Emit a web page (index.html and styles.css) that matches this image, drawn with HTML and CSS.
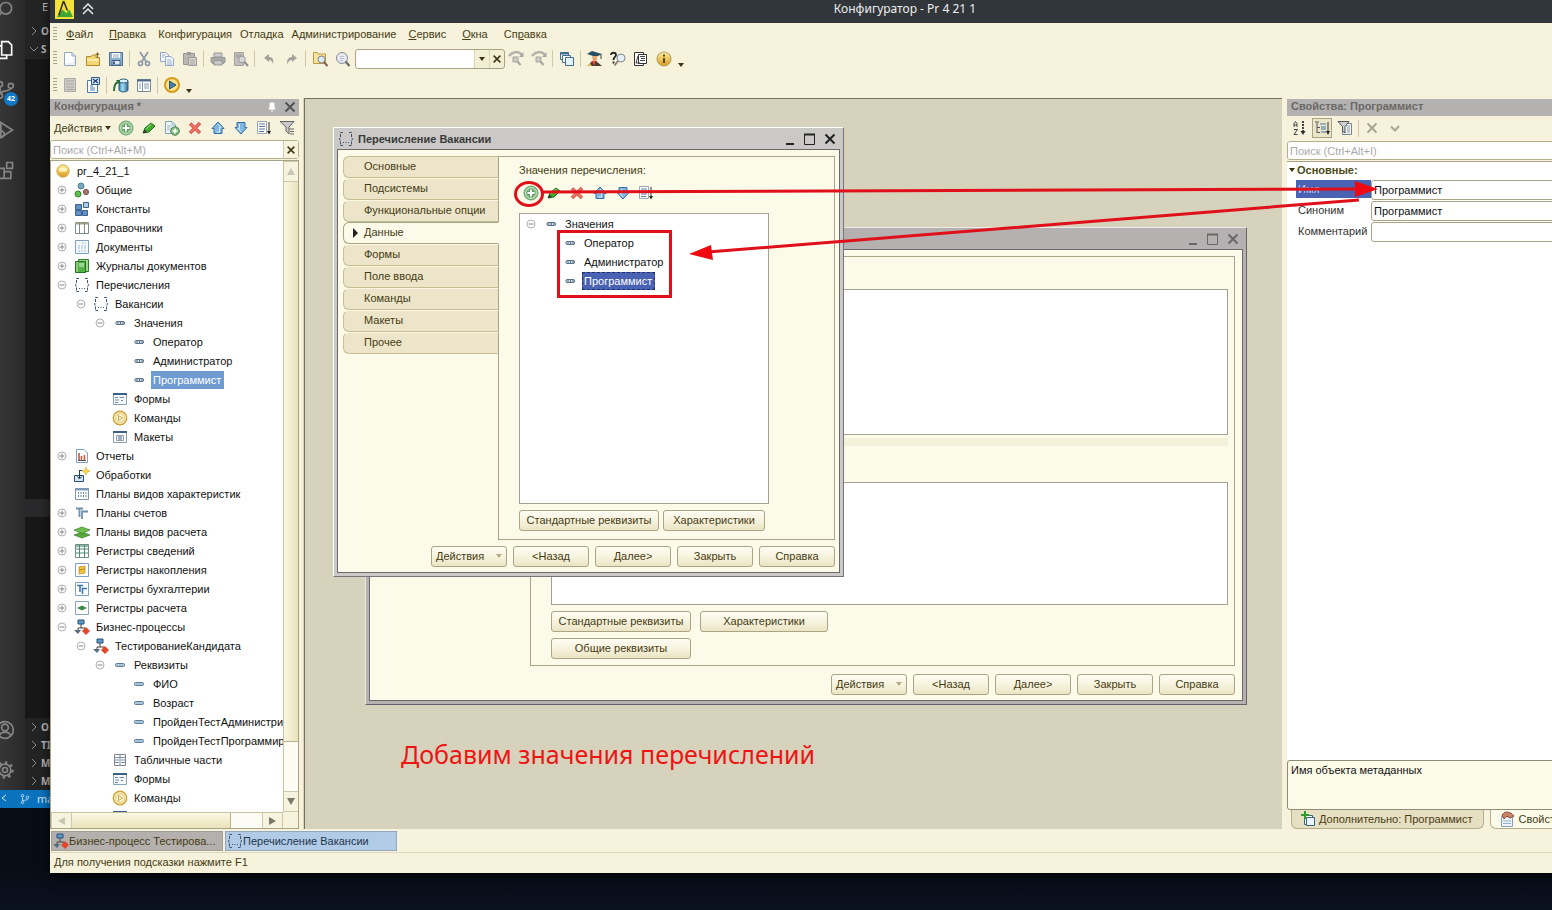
FILE: index.html
```
<!DOCTYPE html>
<html lang="ru">
<head>
<meta charset="utf-8">
<title>Конфигуратор - Pr 4 21 1</title>
<link rel="stylesheet" href="styles.css">
</head>
<body>
<svg class="defs" aria-hidden="true">
  <defs>
    <linearGradient id="gold" x1="0" y1="0" x2="0" y2="1"><stop offset="0" stop-color="#fff0a0"/><stop offset="1" stop-color="#d99a1c"/></linearGradient>
    <linearGradient id="blue" x1="0" y1="0" x2="1" y2="0"><stop offset="0" stop-color="#2d7fb4"/><stop offset=".4" stop-color="#a8dcf2"/><stop offset="1" stop-color="#2a6d9c"/></linearGradient>
  </defs>
  <symbol id="plus" viewBox="0 0 10 10"><circle cx="5" cy="5" r="4" fill="#fff" stroke="#b0b0b0"/><path d="M2.500 5H7.500M5 2.500V7.500" stroke="#888"/></symbol>
  <symbol id="minus" viewBox="0 0 10 10"><circle cx="5" cy="5" r="4" fill="#fff" stroke="#b0b0b0"/><path d="M2.500 5H7.500" stroke="#888"/></symbol>
  <symbol id="add" viewBox="0 0 16 16"><circle cx="8" cy="8" r="7" fill="#8cc08a" stroke="#6f9f72"/><circle cx="8" cy="8" r="5.500" fill="none" stroke="#bfe0b8"/><path d="M8 4V12M4 8H12" stroke="#5f9a63" stroke-width="4"/><path d="M8 4.500V11.500M4.500 8H11.500" stroke="#fff" stroke-width="2"/></symbol>
  <symbol id="pencil" viewBox="0 0 16 16"><path d="M2 13L4 8L10 3L14 6L8 12Z" fill="#3fae2a" stroke="#1f6d1a"/><path d="M5 9L10.500 4" stroke="#a6e38c"/><path d="M2 13L3.500 9.500L6 12.300Z" fill="#333"/></symbol>
  <symbol id="copyadd" viewBox="0 0 16 16"><path d="M1.500 1.500H8L11.500 5V13.500H1.500Z" fill="#f4fafc" stroke="#7ba3b8"/><path d="M8 1.500V5H11.500M3 6H8M3 8H7M3 10H6" fill="none" stroke="#9db9c8"/><circle cx="11" cy="11" r="4.300" fill="#7cba78" stroke="#4f8a55"/><path d="M11 8.500V13.500M8.500 11H13.500" stroke="#fff" stroke-width="1.600"/></symbol>
  <symbol id="del" viewBox="0 0 16 16"><path d="M3 3.500L13 13M13 3L3 13" stroke="#d4574a" stroke-width="3.400"/><path d="M3.500 4L12.500 12.500M12.500 3.500L3.500 12.500" stroke="#f0776a" stroke-width="1.600"/></symbol>
  <symbol id="up" viewBox="0 0 16 16"><path d="M8 2L14 8.500H12V13.500H4V8.500H2Z" fill="#7fb8e4" stroke="#3a6c9c"/><path d="M8 4L11 7.500H9.500V12H6.500" fill="none" stroke="#d4ebfa"/></symbol>
  <symbol id="down" viewBox="0 0 16 16"><path d="M8 14L14 7.500H12V2.500H4V7.500H2Z" fill="#7fb8e4" stroke="#3a6c9c"/><path d="M6.500 4V8.500H5L8 12" fill="none" stroke="#d4ebfa"/></symbol>
  <symbol id="sort" viewBox="0 0 16 16"><path d="M1.500 1.500H10.500V13.500H1.500Z" fill="#fff" stroke="#9aa8b4"/><path d="M3 4H9M3 6.500H9M3 9H9M3 11.500H8" stroke="#56789a"/><path d="M13 2V13" stroke="#333"/><path d="M11 11H15L13 14.500Z" fill="#222"/></symbol>
  <symbol id="filter" viewBox="0 0 16 16"><path d="M1 1.500H15L10 7V14L7 11V7Z" fill="#c9c9c9" stroke="#666"/><path d="M10 9H15M11 11.500H15M11 14H15" stroke="#666"/></symbol>
  <symbol id="filterdoc" viewBox="0 0 16 16"><path d="M5.500 3.500H14.500V14.500H5.500Z" fill="#eef2f6" stroke="#7a8896"/><path d="M9 6H13M10 8H13M10 10H13M10 12H13" stroke="#8fa0b0"/><path d="M1 1.500H12L8 6.500V13L5.500 11V6.500Z" fill="#d0d0d0" stroke="#555"/></symbol>
  <symbol id="new" viewBox="0 0 16 16"><path d="M2.500 1.500H10L13.500 5V14.500H2.500Z" fill="#fff" stroke="#8ea8c0"/><path d="M10 1.500V5H13.500" fill="#dce8f2" stroke="#8ea8c0"/><path d="M4 13H12V7" fill="none" stroke="#d5e3ee"/></symbol>
  <symbol id="open" viewBox="0 0 16 16"><path d="M1.500 5.500H6L7.500 4H11V6.500H14.500V14.500H1.500Z" fill="#f3d774" stroke="#b08a2c"/><path d="M2 9H14" stroke="#fbecae" stroke-width="2"/><path d="M12.500 7V2" stroke="#8a6d20"/><path d="M10.500 4L12.500 1L14.500 4Z" fill="#8a6d20"/></symbol>
  <symbol id="save" viewBox="0 0 16 16"><path d="M1.500 1.500H14.500V14.500H1.500Z" fill="#8fb2d0" stroke="#4f6f92"/><path d="M4 2H12V7H4Z" fill="#fff"/><path d="M5 4H11M5 6H11" stroke="#8ea8c0"/><path d="M4 9.500H12V14H4Z" fill="#dfe9f0" stroke="#3f5f82"/><path d="M6 10.500V13" stroke="#3f5f82" stroke-width="2"/></symbol>
  <symbol id="cut" viewBox="0 0 16 16"><path d="M4 1L10.500 11M12 1L5.500 11" stroke="#8f9aa8" stroke-width="1.800"/><circle cx="4.500" cy="12.500" r="2" fill="none" stroke="#8a93a4" stroke-width="1.500"/><circle cx="11.500" cy="12.500" r="2" fill="none" stroke="#8a93a4" stroke-width="1.500"/></symbol>
  <symbol id="copy" viewBox="0 0 16 16"><path d="M1.500 1.500H7L9.500 4V10.500H1.500Z" fill="#f2f5fa" stroke="#93a4c6"/><path d="M6.500 5.500H12L14.500 8V14.500H6.500Z" fill="#f2f5fa" stroke="#93a4c6"/><path d="M3 4H6M3 6H5M8 9H12M8 11H13M8 13H13" stroke="#9fb0d0"/></symbol>
  <symbol id="paste" viewBox="0 0 16 16"><path d="M1.500 2.500H12.500V13.500H1.500Z" fill="#bab8b2" stroke="#9a9894"/><path d="M5 1H9V4H5Z" fill="#999"/><path d="M6.500 6.500H14.500V14.500H6.500Z" fill="#d6d4ce" stroke="#9c9a98"/><path d="M8 9H13M8 11H13M8 13H13" stroke="#aaa"/></symbol>
  <symbol id="print" viewBox="0 0 16 16"><path d="M4 2H12V6H4Z" fill="#ccc" stroke="#999"/><path d="M1 6.500H15V11L13 13H3L1 11Z" fill="#aaa" stroke="#999"/><path d="M4 9.500H12V14H4Z" fill="#c8c8c8" stroke="#999"/></symbol>
  <symbol id="preview" viewBox="0 0 16 16"><path d="M1.500 1.500H10.500V14.500H1.500Z" fill="#c2c0bc" stroke="#a5a39f"/><path d="M3 4H9M3 6H9" stroke="#999"/><circle cx="9" cy="8.500" r="3.300" fill="#d6d6d6" stroke="#999"/><path d="M11.500 11L15 15" stroke="#8d8d8d" stroke-width="2"/></symbol>
  <symbol id="undo" viewBox="0 0 16 16"><path d="M3 7L8 3V6C12 6 13 9 12 13C11 10 10 9 8 9V11Z" fill="#a3a39c"/></symbol>
  <symbol id="redo" viewBox="0 0 16 16"><path d="M13 7L8 3V6C4 6 3 9 3 13C5 10 6 9 8 9V11Z" fill="#a3a39c"/></symbol>
  <symbol id="findin" viewBox="0 0 16 16"><path d="M1.500 1.500H5L6 3H13.500V12.500H1.500Z" fill="#f6e3a0" stroke="#c19b3e"/><circle cx="9.500" cy="8.500" r="3.500" fill="#dcecf5" stroke="#7b7b86"/><path d="M12 11L15.500 15" stroke="#8a5f50" stroke-width="2"/></symbol>
  <symbol id="mag" viewBox="0 0 16 16"><circle cx="7" cy="7" r="5.500" fill="#e4e9f2" stroke="#888c98"/><path d="M5 5.500H9M5 7.500H9M5 9.500H8" stroke="#c0c4d0"/><path d="M10.500 10.500L14.500 15" stroke="#6e6a68" stroke-width="2.400"/></symbol>
  <symbol id="search-next" viewBox="0 0 16 16"><path d="M1 5C5 0 11 0 14 4" fill="none" stroke="#b3b1aa" stroke-width="2.400"/><path d="M11 6H15.500V1Z" fill="#a8a8a2"/><path d="M5 6H10V11H5Z" fill="#c9c8c2" stroke="#a5a5a0"/><path d="M9.500 10.500L12.500 14" stroke="#a5a5a0" stroke-width="2"/></symbol>
  <symbol id="windows" viewBox="0 0 16 16"><path d="M1.500 1.500H9.500V8.500H1.500Z" fill="#fff" stroke="#426c94"/><path d="M1 2.500H10" stroke="#426c94" stroke-width="2"/><path d="M3.500 4.500H11.500V11.500H3.500Z" fill="#fff" stroke="#426c94"/><path d="M6.500 6.500H14.500V14.500H6.500Z" fill="#e3f3fa" stroke="#426c94"/></symbol>
  <symbol id="grad" viewBox="0 0 16 16"><path d="M0 3L5 0L15 3L9 6Z" fill="#274d63"/><path d="M14 3V8" stroke="#444"/><path d="M5 5H10V9L8 11H6Z" fill="#e8a77a"/><path d="M1 15L5 10H9L15 15Z" fill="#4a3c30"/><path d="M5 10L7 15L9 10Z" fill="#e24a3a"/><path d="M0 15L3 12L5 15Z" fill="#d8b13c"/></symbol>
  <symbol id="helpfind" viewBox="0 0 16 16"><path d="M1 4C1 1 6 1 6 4C6 6 3.500 6 3.500 9M3.500 10.500V12.500" fill="none" stroke="#222" stroke-width="1.800"/><circle cx="11" cy="7" r="4" fill="#e3eff5" stroke="#7d8c98"/><path d="M8 10L4.500 14.500" stroke="#8a8078" stroke-width="2"/></symbol>
  <symbol id="syntax" viewBox="0 0 16 16"><path d="M1.500 1.500H10.500V14.500H1.500Z" fill="#fff" stroke="#333"/><path d="M5.500 3.500H13.500V12.500H5.500Z" fill="#fff" stroke="#333"/><path d="M7 5.500H12M8 7.500H12M7 9.500H12M5 5L3 12H7" fill="none" stroke="#444"/></symbol>
  <symbol id="info" viewBox="0 0 16 16"><circle cx="8" cy="8" r="7" fill="url(#gold)" stroke="#b09a5c"/><path d="M8 7V12M8 3.500V5.500" stroke="#5a4a18" stroke-width="2"/></symbol>
  <symbol id="doc-off" viewBox="0 0 16 16"><path d="M2.500 1.500H13.500V14.500H2.500Z" fill="#cfcdc6" stroke="#aaa"/><path d="M4 4H12M4 7H12M4 10H12M4 12.500H12" stroke="#a4a4a0"/></symbol>
  <symbol id="doc-x" viewBox="0 0 16 16"><path d="M2.500 3.500H12.500V15.500H2.500Z" fill="#fff" stroke="#4d78a8"/><path d="M5 9H8M5 11H10M5 13H10" stroke="#4d78a8"/><path d="M6.500 .500H14.500V7.500H6.500Z" fill="#dceaf7" stroke="#2d588c"/><path d="M8 2L13 6M13 2L8 6" stroke="#22456e" stroke-width="1.500"/></symbol>
  <symbol id="db" viewBox="0 0 16 16"><path d="M6 4V13C6 15.500 15 15.500 15 13V4Z" fill="url(#blue)" stroke="#2c5b80"/><ellipse cx="10.500" cy="4" rx="4.500" ry="2" fill="#d7f0fa" stroke="#2c5b80"/><path d="M1 14C1 9 2 6 5 5" fill="none" stroke="#2b6b35" stroke-width="2"/><path d="M3 3H7V8Z" fill="#2b6b35"/></symbol>
  <symbol id="winlist" viewBox="0 0 16 16"><path d="M1.500 2.500H14.500V14.500H1.500Z" fill="#fff" stroke="#7b8a98"/><path d="M1 3.500H15" stroke="#4a6b8c" stroke-width="2"/><path d="M6.500 5V14M3 7H5M3 9H5M3 11H5M8 7H13M8 9H13M8 11H13" stroke="#889cb0"/></symbol>
  <symbol id="play" viewBox="0 0 16 16"><circle cx="8" cy="8" r="7" fill="#fbe48a" stroke="#d69a1c" stroke-width="2"/><path d="M5.500 4L12 8L5.500 12Z" fill="#4a7fae" stroke="#28527a"/></symbol>
  <symbol id="ball" viewBox="0 0 16 16"><circle cx="8" cy="8" r="6.200" fill="url(#gold)" stroke="#d3a94c"/><path d="M4 6C6 4 10 4 12 6V8C10 9 6 9 4 8Z" fill="#fff2bc"/></symbol>
  <symbol id="common" viewBox="0 0 16 16"><circle cx="7" cy="4" r="3" fill="#78a9b8" stroke="#4d7f90"/><circle cx="4" cy="12" r="3" fill="#5cc04a" stroke="#2f8a2a"/><circle cx="12" cy="10" r="2.600" fill="#a8766a" stroke="#7d5248"/></symbol>
  <symbol id="const" viewBox="0 0 16 16"><path d="M1.500 3.500H7.500V8.500H1.500ZM1.500 9.500H7.500V14.500H1.500ZM8.500 9.500H13.500V14.500H8.500Z" fill="#5f92c6" stroke="#3b628c"/><path d="M9.500 1.500H14.500V6.500H9.500Z" fill="#a9d0ea" stroke="#3b628c"/></symbol>
  <symbol id="refs" viewBox="0 0 16 16"><path d="M1.500 2.500H14.500V13.500H1.500Z" fill="#fff" stroke="#7e8c86"/><path d="M1 3.500H15" stroke="#a7a288" stroke-width="2"/><path d="M5.500 3V14M10.500 3V14" stroke="#7e8c86"/></symbol>
  <symbol id="docs" viewBox="0 0 16 16"><path d="M1.500 1.500H14.500V14.500H1.500Z" fill="#f4f9fd" stroke="#7fa0c4"/><path d="M8 4H12M4 7H12M4 9H12M4 12H12" stroke="#9bbbd8" stroke-dasharray="2 1"/></symbol>
  <symbol id="journal" viewBox="0 0 16 16"><path d="M4.500 1.500H14.500V13.500H4.500Z" fill="#9fd88a" stroke="#2f7f2c"/><path d="M1.500 3.500H11.500V14.500H1.500Z" fill="#55b045" stroke="#24701f"/><path d="M5 6H10M5 8H10" stroke="#dff5d5"/><path d="M3 4V14" stroke="#c2ecb4"/></symbol>
  <symbol id="enum" viewBox="0 0 16 16"><path d="M5 1.500H2.500V6L1.500 8L2.500 10V14.500H5M11 1.500H13.500V6L14.500 8L13.500 10V14.500H11" fill="none" stroke="#3f566e" stroke-dasharray="3 1"/><path d="M5 11.500H6M7.500 11.500H8.500M10 11.500H11" stroke="#3f566e"/></symbol>
  <symbol id="val" viewBox="0 0 16 16"><path d="M4.500 6.500H12L12.800 8L12 9.500H4.500L3.700 8Z" fill="#d2dfe8" stroke="#5d7488"/><path d="M6 6V10M8.500 6V10M11 6V10" stroke="#5d7488"/></symbol>
  <symbol id="attr" viewBox="0 0 16 16"><rect x="3.500" y="6.500" width="9" height="3" rx="1" fill="#a8c4d8" stroke="#607d96"/></symbol>
  <symbol id="form" viewBox="0 0 16 16"><path d="M1.500 2.500H14.500V13.500H1.500Z" fill="#f4f8fb" stroke="#8aa0b4"/><path d="M1 3H15" stroke="#3a6186" stroke-width="2"/><path d="M3 6.500H6M7.500 6.500H12M3 9H7M3 11.500H6M9 9.500H11" stroke="#6e8aa4"/></symbol>
  <symbol id="cmd" viewBox="0 0 16 16"><circle cx="8" cy="8" r="6.700" fill="#fdf3c0" stroke="#cfa03a" stroke-width="1.400"/><circle cx="8" cy="8" r="4.300" fill="#fffbe6" stroke="#dfbf60"/><path d="M6.500 5.500L10.500 8L6.500 10.500Z" fill="#fff" stroke="#cfa03a"/></symbol>
  <symbol id="layout" viewBox="0 0 16 16"><path d="M1.500 2.500H14.500V13.500H1.500Z" fill="#fff" stroke="#8c9eae"/><path d="M1 3H15" stroke="#3d6186" stroke-width="2"/><path d="M4.500 6.500H11.500V11.500H4.500Z" fill="#eef3f8" stroke="#8fa2b4"/><path d="M6 8H10M6 10H10" stroke="#4f6a86"/></symbol>
  <symbol id="report" viewBox="0 0 16 16"><path d="M2.500 1.500H10L13.500 5V14.500H2.500Z" fill="#fff" stroke="#7fa0c4"/><path d="M5 12V5M7.500 12V8M10.500 12V7" stroke="#c05a3c" stroke-width="1.600"/><path d="M4 12.500H12" stroke="#555"/></symbol>
  <symbol id="proc" viewBox="0 0 16 16"><path d="M.500 8.500H9.500V14.500H.500Z" fill="#d6e4f2" stroke="#2c4c72"/><path d="M5.500 3V11M3.500 9.500L5.500 12L7.500 9.500M5.500 3.500H8" fill="none" stroke="#1f3a5c"/><path d="M12 0L13 3L16 4L13 5.500L12 8L10.500 5.500L8 4L11 3Z" fill="#f6d850" stroke="#d8ac2c" stroke-width=".600"/></symbol>
  <symbol id="plan" viewBox="0 0 16 16"><path d="M1.500 2.500H14.500V13.500H1.500Z" fill="#fff" stroke="#7d93a8"/><path d="M1 3.500H15" stroke="#7f9cb8" stroke-width="2"/><path d="M4.500 6V12M7 6V12M9.500 6V12M12 6V12" stroke="#5f83a8" stroke-dasharray="2 1"/></symbol>
  <symbol id="accounts" viewBox="0 0 16 16"><path d="M2 3.500H9M5.500 3V12M8 5.500V14M8 6.500H14" fill="none" stroke="#6b90b2" stroke-width="1.800"/></symbol>
  <symbol id="calc" viewBox="0 0 16 16"><path d="M0 11L8 8L16 11L8 14Z" fill="#57a83c" stroke="#2d7020" stroke-width=".600"/><path d="M0 6L8 3L16 6L8 9.500Z" fill="#6cc04a" stroke="#2d7020" stroke-width=".600"/></symbol>
  <symbol id="reginfo" viewBox="0 0 16 16"><path d="M1.500 1.500H14.500V14.500H1.500Z" fill="#fff" stroke="#6c8f86"/><path d="M2 3H14" stroke="#8fb8aa" stroke-width="2"/><path d="M5.500 2V14M10.500 2V14M2 6H14M2 10H14" stroke="#4f8a76"/></symbol>
  <symbol id="regacc" viewBox="0 0 16 16"><path d="M1.500 1.500H14.500V14.500H1.500Z" fill="#fff" stroke="#7fa0c4"/><path d="M5 5L11 4V11L5 12Z" fill="#f2c63e" stroke="#b88420" stroke-width=".700"/><path d="M5 8L11 7" stroke="#b88420"/></symbol>
  <symbol id="regbook" viewBox="0 0 16 16"><path d="M1.500 1.500H14.500V14.500H1.500Z" fill="#fff" stroke="#7fa0c4"/><path d="M3 4.500H9M6 4V11M8.500 6.500V13M8.500 7.500H13" stroke="#3f76a8" stroke-width="1.600"/></symbol>
  <symbol id="regcalc" viewBox="0 0 16 16"><path d="M1.500 1.500H14.500V14.500H1.500Z" fill="#fff" stroke="#88a8b8"/><path d="M3 8L8 5.500L13 8L8 10.500Z" fill="#3f8a4a"/></symbol>
  <symbol id="bp" viewBox="0 0 16 16"><path d="M4 1H10V5H4Z" fill="#5f9ac4" stroke="#28507c"/><path d="M7 5V9M4 9H11M4 9V12M11 9V11" fill="none" stroke="#444"/><path d="M0 11H7L4 15Z" fill="#566c80"/><path d="M12 8L16 12L12 16L8 12Z" fill="#e0492e"/></symbol>
  <symbol id="table" viewBox="0 0 16 16"><path d="M2.500 2.500H13.500V13.500H2.500Z" fill="#fff" stroke="#7c8894"/><path d="M8 3V13M3 5.500H13M3 8H7M9 8H13M3 10.500H7M9 10.500H13" stroke="#7c8ea0"/></symbol>
  <symbol id="az" viewBox="0 0 16 16"><path d="M3 7V3.500L4.500 1.500L6 3.500V7M3 5H6M3 9.500H6.500L3 14.500H6.500" fill="none" stroke="#444"/><path d="M12 1V12" stroke="#444" stroke-width="2" stroke-dasharray="2 1"/><path d="M9.500 11H14.500L12 15Z" fill="#333"/></symbol>
  <symbol id="cat" viewBox="0 0 16 16"><path d="M1 2H5M3 3V13M3 7.500H6M3 12.500H6" stroke="#556" fill="none"/><path d="M6 4H12M7 7H12M7 9H12M7 12H12" stroke="#4678a8"/><path d="M14 2V12" stroke="#333"/><path d="M12 11H16L14 15Z" fill="#222"/></symbol>
  <symbol id="cross" viewBox="0 0 16 16"><path d="M3.500 3.500L12.500 12.500M12.500 3.500L3.500 12.500" stroke="currentColor" stroke-width="2"/></symbol>
  <symbol id="check" viewBox="0 0 16 16"><path d="M4 6.500L8 10.500L12 6" fill="none" stroke="currentColor" stroke-width="2"/></symbol>
  <symbol id="min" viewBox="0 0 16 16"><path d="M4 13H12" stroke="currentColor" stroke-width="2"/></symbol>
  <symbol id="max" viewBox="0 0 16 16"><path d="M2.500 3.500H12.500V13.500H2.500Z" fill="none" stroke="currentColor"/><path d="M2 3.500H13" stroke="currentColor" stroke-width="2"/></symbol>
  <symbol id="pin" viewBox="0 0 16 16"><path d="M6 4H10V9H11V10H5V9H6ZM8 10V13" fill="#fff" stroke="#fff"/></symbol>
  <symbol id="addwin" viewBox="0 0 16 16"><path d="M4.500 4.500H12.500V13.500H4.500Z" fill="#fff" stroke="#3a6186"/><path d="M6.500 6.500H14.500V14.500H6.500Z" fill="#edf5fb" stroke="#3a6186"/><path d="M5 0V8M1 4H9" stroke="#2f9a2c" stroke-width="2"/></symbol>
  <symbol id="props" viewBox="0 0 16 16"><path d="M2.500 5.500H13.500V15.500H2.500Z" fill="#eef4fa" stroke="#8aa0b8"/><path d="M4 10H12M4 12.500H12" stroke="#8fb0d0"/><path d="M3 4C6 0 11 0 15 5L11 7L8 5L5 8Z" fill="#c98568" stroke="#8c4a38"/></symbol>
</svg>

<div class="desktop">

  <div class="editor">
    <div class="editor-main">
      <nav class="activity" aria-label="Activity bar">
        <svg class="act" viewBox="0 0 24 24"><circle cx="13" cy="10" r="7"/><path d="M8 15L2 22"/></svg>
        <svg class="act on" viewBox="0 0 24 24"><path d="M8 2H16L20 6V18H8ZM8 7H3V22H14V18"/></svg>
        <span class="act-badge"><svg class="act" viewBox="0 0 24 24"><circle cx="6" cy="5" r="3"/><circle cx="19" cy="7" r="3"/><circle cx="6" cy="19" r="3"/><path d="M6 8V16M19 10C19 14 8 12 6 16"/></svg><b>42</b></span>
        <svg class="act" viewBox="0 0 24 24"><path d="M7 3L21 12L7 21Z"/><circle cx="7" cy="17" r="4"/></svg>
        <svg class="act" viewBox="0 0 24 24"><path d="M3 10H11V22H3ZM11 14H19V22H11ZM14 3H21V10H14Z"/></svg>
        <span class="grow"></span>
        <svg class="act" viewBox="0 0 24 24"><circle cx="12" cy="12" r="10"/><circle cx="12" cy="9" r="4"/><path d="M5 19C7 13 17 13 19 19"/></svg>
        <svg class="act" viewBox="0 0 24 24"><circle cx="12" cy="12" r="3"/><circle cx="12" cy="12" r="7"/><circle cx="12" cy="12" r="9" stroke-width="3" stroke-dasharray="3 4"/></svg>
      </nav>
      <div class="side">
        <p class="side-title">E</p>
        <p class="side-head"><svg viewBox="0 0 8 8"><path d="M2 0L6 4L2 8"/></svg>O</p>
        <p class="side-head"><svg viewBox="0 0 8 8"><path d="M0 2L4 6L8 2"/></svg>S</p>
        <div class="files"><span class="file-on"></span></div>
        <p class="side-head"><svg viewBox="0 0 8 8"><path d="M2 0L6 4L2 8"/></svg>O</p>
        <p class="side-head"><svg viewBox="0 0 8 8"><path d="M2 0L6 4L2 8"/></svg>TI</p>
        <p class="side-head"><svg viewBox="0 0 8 8"><path d="M2 0L6 4L2 8"/></svg>M</p>
        <p class="side-head"><svg viewBox="0 0 8 8"><path d="M2 0L6 4L2 8"/></svg>M</p>
      </div>
    </div>
    <div class="editor-status"><svg viewBox="0 0 8 12"><path d="M5 2L1 5L5 8"/></svg><svg viewBox="0 0 12 12"><circle cx="3" cy="2" r="1.500"/><circle cx="3" cy="10" r="1.500"/><circle cx="9" cy="4" r="1.500"/><path d="M3 4V8M9 6C9 8 5 7 3 8"/></svg>ma</div>
  </div>

  <div class="app">
    <header class="titlebar">
      <svg class="logo" viewBox="0 0 20 20"><path d="M0 0H20V20H0Z" fill="#f3e23c"/><path d="M2 18L8 10L12 14L15 10L19 18Z" fill="#3fa535"/><path d="M9 1L4 16M9 1L13 11" stroke="#2e2a12" stroke-width="1.600" fill="none"/></svg>
      <svg class="chev" viewBox="0 0 12 12"><path d="M1 6L6 1L11 6M1 11L6 6L11 11"/></svg>
      <h1>Конфигуратор - Pr 4 21 1</h1>
    </header>

    <nav class="menubar">
      <span class="grip"></span>
      <button class="mn"><u>Ф</u>айл</button><button class="mn"><u>П</u>равка</button><button class="plain">Конфигурация</button><button class="plain">Отладка</button><button class="plain">Администрирование</button><button class="mn"><u>С</u>ервис</button><button class="mn"><u>О</u>кна</button><button class="mn">Сп<u>р</u>авка</button>
    </nav>

    <div class="toolbar">
      <span class="grip"></span>
      <button aria-label="Новый"><svg><use href="#new"/></svg></button>
      <button aria-label="Открыть"><svg><use href="#open"/></svg></button>
      <button aria-label="Сохранить"><svg><use href="#save"/></svg></button>
      <span class="sep"></span>
      <button aria-label="Вырезать"><svg><use href="#cut"/></svg></button>
      <button aria-label="Копировать"><svg><use href="#copy"/></svg></button>
      <button aria-label="Вставить"><svg><use href="#paste"/></svg></button>
      <span class="sep"></span>
      <button aria-label="Печать"><svg><use href="#print"/></svg></button>
      <button aria-label="Просмотр"><svg><use href="#preview"/></svg></button>
      <span class="sep"></span>
      <button aria-label="Отменить"><svg><use href="#undo"/></svg></button>
      <button aria-label="Вернуть"><svg><use href="#redo"/></svg></button>
      <span class="sep"></span>
      <button aria-label="Глобальный поиск"><svg><use href="#findin"/></svg></button>
      <button aria-label="Найти"><svg><use href="#mag"/></svg></button>
      <span class="combo"><input type="text" aria-label="Строка поиска"><button aria-label="Список"><i class="tri"></i></button><button aria-label="Очистить"><svg><use href="#cross"/></svg></button></span>
      <button aria-label="Найти следующий"><svg><use href="#search-next"/></svg></button>
      <button aria-label="Найти предыдущий"><svg><use href="#search-next"/></svg></button>
      <span class="sep"></span>
      <button aria-label="Окна"><svg><use href="#windows"/></svg></button>
      <span class="sep"></span>
      <button aria-label="Обучение"><svg><use href="#grad"/></svg></button>
      <button aria-label="Поиск в справке"><svg><use href="#helpfind"/></svg></button>
      <button aria-label="Синтакс-помощник"><svg><use href="#syntax"/></svg></button>
      <button aria-label="О программе"><svg><use href="#info"/></svg></button>
      <i class="tri more"></i>
    </div>

    <div class="toolbar second">
      <span class="grip"></span>
      <button aria-label="Модуль"><svg><use href="#doc-off"/></svg></button>
      <button aria-label="Закрыть конфигурацию"><svg><use href="#doc-x"/></svg></button>
      <span class="sep"></span>
      <button aria-label="Обновить базу данных"><svg><use href="#db"/></svg></button>
      <button aria-label="Окно конфигурации"><svg><use href="#winlist"/></svg></button>
      <span class="sep"></span>
      <button aria-label="Запуск"><svg><use href="#play"/></svg></button>
      <i class="tri more"></i>
    </div>

    <div class="work">
      <aside class="config">
        <div class="panel-head"><h2>Конфигурация *</h2><button aria-label="Закрепить"><svg><use href="#pin"/></svg></button><button aria-label="Закрыть панель"><svg><use href="#cross"/></svg></button></div>
        <div class="actions">
          <button class="act-menu">Действия<i class="tri"></i></button>
          <button aria-label="Добавить"><svg><use href="#add"/></svg></button>
          <button aria-label="Изменить"><svg><use href="#pencil"/></svg></button>
          <button aria-label="Скопировать"><svg><use href="#copyadd"/></svg></button>
          <button aria-label="Удалить"><svg><use href="#del"/></svg></button>
          <button aria-label="Вверх"><svg><use href="#up"/></svg></button>
          <button aria-label="Вниз"><svg><use href="#down"/></svg></button>
          <button aria-label="Упорядочить"><svg><use href="#sort"/></svg></button>
          <button aria-label="Отбор"><svg><use href="#filter"/></svg></button>
        </div>
        <div class="search"><input type="text" placeholder="Поиск (Ctrl+Alt+M)" aria-label="Поиск"><button aria-label="Очистить поиск"><svg><use href="#cross"/></svg></button></div>
        <div class="tree-box">
          <ul class="tree">
            <li class="l0"><svg><use href="#ball"/></svg><span>pr_4_21_1</span></li>
            <li class="l1"><svg class="ex"><use href="#plus"/></svg><svg><use href="#common"/></svg><span>Общие</span></li>
            <li class="l1"><svg class="ex"><use href="#plus"/></svg><svg><use href="#const"/></svg><span>Константы</span></li>
            <li class="l1"><svg class="ex"><use href="#plus"/></svg><svg><use href="#refs"/></svg><span>Справочники</span></li>
            <li class="l1"><svg class="ex"><use href="#plus"/></svg><svg><use href="#docs"/></svg><span>Документы</span></li>
            <li class="l1"><svg class="ex"><use href="#plus"/></svg><svg><use href="#journal"/></svg><span>Журналы документов</span></li>
            <li class="l1"><svg class="ex"><use href="#minus"/></svg><svg><use href="#enum"/></svg><span>Перечисления</span></li>
            <li class="l2"><svg class="ex"><use href="#minus"/></svg><svg><use href="#enum"/></svg><span>Вакансии</span></li>
            <li class="l3"><svg class="ex"><use href="#minus"/></svg><svg><use href="#val"/></svg><span>Значения</span></li>
            <li class="l4"><i class="ex"></i><svg><use href="#val"/></svg><span>Оператор</span></li>
            <li class="l4"><i class="ex"></i><svg><use href="#val"/></svg><span>Администратор</span></li>
            <li class="l4"><i class="ex"></i><svg><use href="#val"/></svg><span class="sel">Программист</span></li>
            <li class="l3"><i class="ex"></i><svg><use href="#form"/></svg><span>Формы</span></li>
            <li class="l3"><i class="ex"></i><svg><use href="#cmd"/></svg><span>Команды</span></li>
            <li class="l3"><i class="ex"></i><svg><use href="#layout"/></svg><span>Макеты</span></li>
            <li class="l1"><svg class="ex"><use href="#plus"/></svg><svg><use href="#report"/></svg><span>Отчеты</span></li>
            <li class="l1"><i class="ex"></i><svg><use href="#proc"/></svg><span>Обработки</span></li>
            <li class="l1"><i class="ex"></i><svg><use href="#plan"/></svg><span>Планы видов характеристик</span></li>
            <li class="l1"><svg class="ex"><use href="#plus"/></svg><svg><use href="#accounts"/></svg><span>Планы счетов</span></li>
            <li class="l1"><svg class="ex"><use href="#plus"/></svg><svg><use href="#calc"/></svg><span>Планы видов расчета</span></li>
            <li class="l1"><svg class="ex"><use href="#plus"/></svg><svg><use href="#reginfo"/></svg><span>Регистры сведений</span></li>
            <li class="l1"><svg class="ex"><use href="#plus"/></svg><svg><use href="#regacc"/></svg><span>Регистры накопления</span></li>
            <li class="l1"><svg class="ex"><use href="#plus"/></svg><svg><use href="#regbook"/></svg><span>Регистры бухгалтерии</span></li>
            <li class="l1"><svg class="ex"><use href="#plus"/></svg><svg><use href="#regcalc"/></svg><span>Регистры расчета</span></li>
            <li class="l1"><svg class="ex"><use href="#minus"/></svg><svg><use href="#bp"/></svg><span>Бизнес-процессы</span></li>
            <li class="l2"><svg class="ex"><use href="#minus"/></svg><svg><use href="#bp"/></svg><span>ТестированиеКандидата</span></li>
            <li class="l3"><svg class="ex"><use href="#minus"/></svg><svg><use href="#attr"/></svg><span>Реквизиты</span></li>
            <li class="l4"><i class="ex"></i><svg><use href="#attr"/></svg><span>ФИО</span></li>
            <li class="l4"><i class="ex"></i><svg><use href="#attr"/></svg><span>Возраст</span></li>
            <li class="l4"><i class="ex"></i><svg><use href="#attr"/></svg><span>ПройденТестАдминистри</span></li>
            <li class="l4"><i class="ex"></i><svg><use href="#attr"/></svg><span>ПройденТестПрограммир</span></li>
            <li class="l3"><i class="ex"></i><svg><use href="#table"/></svg><span>Табличные части</span></li>
            <li class="l3"><i class="ex"></i><svg><use href="#form"/></svg><span>Формы</span></li>
            <li class="l3"><i class="ex"></i><svg><use href="#cmd"/></svg><span>Команды</span></li>
            <li class="l3"><i class="ex"></i><svg><use href="#layout"/></svg></li>
          </ul>
          <div class="vscroll"><button class="dim" aria-label="Прокрутить вверх"><i class="arr u"></i></button><span class="thumb"></span><span class="track"></span><button aria-label="Прокрутить вниз"><i class="arr d"></i></button></div>
          <div class="hscroll"><button class="dim" aria-label="Прокрутить влево"><i class="arr l"></i></button><span class="thumb"></span><span class="track"></span><button aria-label="Прокрутить вправо"><i class="arr r"></i></button></div>
          <span class="corner"></span>
        </div>
      </aside>

      <main class="mdi">
        <section class="win back" aria-label="Бизнес-процесс ТестированиеКандидата">
          <div class="win-title"><span class="grow"></span><button aria-label="Свернуть"><svg><use href="#min"/></svg></button><button aria-label="Развернуть"><svg><use href="#max"/></svg></button><button aria-label="Закрыть окно"><svg><use href="#cross"/></svg></button></div>
          <div class="win-body">
            <div class="pane-row">
              <div class="back-tabs"></div>
              <div class="pane">
                <div class="box attrs"></div>
                <div class="strip"></div>
                <div class="box parts"></div>
                <div class="btns wide"><button class="btn w140">Стандартные реквизиты</button><button class="btn w128">Характеристики</button></div>
                <div class="btns"><button class="btn w140">Общие реквизиты</button></div>
              </div>
            </div>
            <div class="btns foot"><button class="btn w76 drop">Действия<i class="tri"></i></button><button class="btn w76">&lt;Назад</button><button class="btn w76">Далее&gt;</button><button class="btn w76">Закрыть</button><button class="btn w76">Справка</button></div>
          </div>
        </section>

        <section class="win front" aria-label="Перечисление Вакансии">
          <div class="win-title"><svg><use href="#enum"/></svg><h2>Перечисление Вакансии</h2><span class="grow"></span><button aria-label="Свернуть"><svg><use href="#min"/></svg></button><button aria-label="Развернуть"><svg><use href="#max"/></svg></button><button aria-label="Закрыть окно"><svg><use href="#cross"/></svg></button></div>
          <div class="win-body">
            <div class="pane-row">
              <div class="tabs">
                <button>Основные</button><button>Подсистемы</button><button>Функциональные опции</button><button class="on">Данные</button><button>Формы</button><button>Поле ввода</button><button>Команды</button><button>Макеты</button><button>Прочее</button>
              </div>
              <div class="pane">
                <p class="caption">Значения перечисления:</p>
                <div class="mini">
                  <button aria-label="Добавить значение"><svg><use href="#add"/></svg></button>
                  <button aria-label="Изменить значение"><svg><use href="#pencil"/></svg></button>
                  <button aria-label="Удалить значение"><svg><use href="#del"/></svg></button>
                  <button aria-label="Поднять"><svg><use href="#up"/></svg></button>
                  <button aria-label="Опустить"><svg><use href="#down"/></svg></button>
                  <button aria-label="Сортировать"><svg><use href="#sort"/></svg></button>
                </div>
                <ul class="tree box values">
                  <li class="l1"><svg class="ex"><use href="#minus"/></svg><svg><use href="#val"/></svg><span>Значения</span></li>
                  <li class="l2"><i class="ex"></i><svg><use href="#val"/></svg><span>Оператор</span></li>
                  <li class="l2"><i class="ex"></i><svg><use href="#val"/></svg><span>Администратор</span></li>
                  <li class="l2"><i class="ex"></i><svg><use href="#val"/></svg><span class="sel strong">Программист</span></li>
                </ul>
                <div class="btns near"><button class="btn w140">Стандартные реквизиты</button><button class="btn w102">Характеристики</button></div>
              </div>
            </div>
            <div class="btns foot"><button class="btn w76 drop">Действия<i class="tri"></i></button><button class="btn w76">&lt;Назад</button><button class="btn w76">Далее&gt;</button><button class="btn w76">Закрыть</button><button class="btn w76">Справка</button></div>
          </div>
        </section>
        <p class="note">Добавим значения перечислений</p>
      </main>

      <aside class="properties">
        <div class="panel-head"><h2>Свойства: Программист</h2></div>
        <div class="actions">
          <button aria-label="По алфавиту"><svg><use href="#az"/></svg></button>
          <button class="pressed" aria-label="По категориям"><svg><use href="#cat"/></svg></button>
          <button aria-label="Только важные"><svg><use href="#filterdoc"/></svg></button>
          <span class="sep"></span>
          <button class="gray" aria-label="Отменить изменения"><svg><use href="#cross"/></svg></button>
          <button class="gray" aria-label="Применить изменения"><svg><use href="#check"/></svg></button>
        </div>
        <div class="search"><input type="text" placeholder="Поиск (Ctrl+Alt+I)" aria-label="Поиск свойства"></div>
        <div class="props">
          <h3><i class="tri"></i>Основные:</h3>
          <div class="prop on"><label for="p-name">Имя</label><input id="p-name" type="text" value="Программист"></div>
          <div class="prop"><label for="p-syn">Синоним</label><input id="p-syn" type="text" value="Программист"></div>
          <div class="prop"><label for="p-com">Комментарий</label><input id="p-com" type="text"></div>
        </div>
        <div class="hint">Имя объекта метаданных</div>
        <div class="ptabs"><button><svg><use href="#addwin"/></svg>Дополнительно: Программист</button><button class="on"><svg><use href="#props"/></svg>Свойства: Программист</button></div>
      </aside>
    </div>

    <div class="wintabs"><button class="w172"><svg><use href="#bp"/></svg>Бизнес-процесс Тестирова...</button><button class="w172 on"><svg><use href="#enum"/></svg>Перечисление Вакансии</button></div>
    <footer class="status">Для получения подсказки нажмите F1</footer>
  </div>

  <svg class="marks" aria-hidden="true">
    <g fill="none" stroke="#e0101a" stroke-width="3">
      <ellipse cx="529" cy="194" rx="13.500" ry="11.500"/>
      <path d="M542 192L1360 189M1359 200L708 252"/>
      <path d="M558.500 231.500H670.500V296.500H558.500Z"/>
    </g>
    <path d="M1378 189L1355 181V197ZM689 254L711 245L713 260Z" fill="#ee0a10"/>
  </svg>
</div>
</body>
</html>
```
FILE: styles.css
```
* { box-sizing: border-box; }
body { margin: 0; font: 11px/14px "Liberation Sans", Arial, sans-serif; color: #463c14; background: #080e1c; overflow: hidden; }
button { font: inherit; color: inherit; background: none; border: 0; padding: 0; margin: 0; }
input { font: inherit; color: #111; min-width: 0; border: 0; padding: 0; margin: 0; background: #fff; outline: 0; }
h1, h2, h3, p, ul { margin: 0; padding: 0; }
svg { display: block; flex: none; width: 16px; height: 16px; }
.defs { position: absolute; width: 0; height: 0; }
.grow { flex: 1; }
.desktop { position: relative; height: 100vh; overflow: hidden; background: linear-gradient(#080c14, #080c14 95%, #0a1120); }

/* code editor peeking out behind the main window */
.editor { position: absolute; inset: 0 auto 102px 0; width: 640px; display: flex; flex-direction: column; font: 11px/14px "Noto Sans", sans-serif; }
.editor-main { flex: 1; display: flex; min-height: 0; }
.activity { width: 25px; background: linear-gradient(90deg, #363637, #29292a); display: flex; flex-direction: column; gap: 20px; padding-bottom: 10px; }
.act { width: 20px; height: 20px; margin-left: -5px; fill: none; stroke: #858585; stroke-width: 2; }
.act.on { stroke: #fff; }
.act-badge { position: relative; }
.act-badge b { position: absolute; left: 4px; top: 12px; width: 14px; border-radius: 7px; background: #1079c8; color: #fff; font-size: 7px; line-height: 14px; text-align: center; }
.side { width: 615px; display: flex; flex-direction: column; background: #232324; color: #b4b4b4; }
.side-title { padding: 0 0 8px 17px; }
.side-head { display: flex; align-items: center; gap: 3px; height: 18px; padding-left: 5px; font-size: 10px; font-weight: 700; }
.side-head svg { width: 8px; height: 8px; fill: none; stroke: #8a8a8a; }
.files { flex: 1; margin-top: 1px; background: #171718; }
.file-on { display: block; margin-top: 440px; height: 18px; background: #29292b; }
.editor-status { display: flex; align-items: center; gap: 16px; height: 18px; background: #0b73bd; color: #cfe4f4; }
.editor-status svg { width: 10px; height: 12px; fill: none; stroke: #cfe4f4; margin-right: -9px; }
.editor-status svg:first-child { margin-right: -6px; }

/* main window */
.app { position: absolute; inset: 0 -208px 37px 50px; display: flex; flex-direction: column; background: #f6f2dc; box-shadow: 0 4px 10px #000a; }
.titlebar { display: flex; align-items: center; height: 23px; padding: 0 5px 5px; background: #31363b; }
.titlebar h1 { flex: 1; margin-right: 39px; text-align: center; font: 12px/18px "Noto Sans", sans-serif; color: #eee; }
.logo { width: 19px; height: 19px; }
.chev { width: 12px; height: 12px; margin-left: 8px; fill: none; stroke: #e8e8e8; stroke-width: 1.500; }
.menubar { display: flex; align-items: center; height: 22px; padding: 0 3px; }
.menubar .mn { padding: 0 8px; }
.menubar .plain { padding: 0 4px; }
.grip { width: 4px; height: 15px; margin-right: -2px; background: repeating-linear-gradient(#aaa486 0 1px, transparent 1px 3px); }
.menubar .grip { margin-right: 1px; }
.toolbar { display: flex; align-items: center; gap: 7px; height: 27px; padding: 0 3px; }
.second { height: 26px; }
.sep { width: 1px; height: 17px; margin: 0 -1px 0 -2px; background: #cfc9ab; }
.tri { display: inline-block; border: 3px solid transparent; border-top: 4px solid #3c3410; border-bottom: 0; }
.more { margin: 12px 0 0 -1px; }
.combo { display: flex; width: 150px; height: 20px; margin: 0 -4px 0 -3px; border: 1px solid #aaa486; border-radius: 3px; background: #f3efd4; }
.combo input { flex: 1; border-radius: 3px; }
.combo button { width: 15px; display: grid; place-items: center; border-left: 1px solid #dcd6b8; }
.combo svg, .search svg { width: 12px; height: 12px; color: #3c3410; }

.work { flex: 1; display: flex; min-height: 0; }
.config { width: 254px; padding-right: 4px; display: flex; flex-direction: column; border-right: 1px solid #d8d2b8; padding-top: 1px; }
.panel-head { display: flex; align-items: center; height: 17px; padding: 0 1px 2px 4px; background: #b4b2b0; color: #6b6866; }
.panel-head h2 { flex: 1; font-size: 11px; line-height: 15px; }
.panel-head button { color: #545454; margin-left: 2px; }
.actions { display: flex; align-items: center; gap: 7px; height: 24px; padding-left: 4px; }
.act-menu { display: flex; align-items: center; gap: 3px; }
.search { display: flex; height: 19px; border: 1px solid #b5af8c; border-radius: 3px; background: #fff; }
.search input { flex: 1; padding-left: 2px; border-radius: 3px; }
.search input::placeholder { color: #aaa; opacity: 1; }
.search button { display: grid; place-items: center; width: 15px; background: #f6f2dc; border-left: 1px solid #d0caac; }
.tree-box { flex: 1; min-height: 0; display: grid; grid-template: minmax(0, 1fr) 16px / minmax(0, 1fr) 15px; margin-top: 1px; border: 1px solid #aaa486; background: #fff; }
.tree { overflow: hidden; list-style: none; color: #111; }
.tree li { display: flex; align-items: center; height: 19px; white-space: nowrap; }
.tree .ex { flex: none; width: 10px; height: 10px; margin-right: 7px; }
.tree span { margin-left: 4px; padding: 0 2px; line-height: 18px; }
.l0 { padding-left: 4px; }
.l1 { padding-left: 6px; }
.l2 { padding-left: 25px; }
.l3 { padding-left: 44px; }
.l4 { padding-left: 63px; }
.tree .sel { padding-right: 3px; background: #6f9bd3; color: #fff; }
.tree .strong { background: #4a62b4; outline: 1px dashed #222f66; outline-offset: -1px; }
.vscroll, .hscroll { display: flex; background: #fdfcf4; }
.vscroll { flex-direction: column; border-left: 1px solid #c9c3a4; }
.vscroll button { height: 21px; border: solid #cfc9ab; border-width: 1px 0; display: grid; place-items: center; background: #f6f3de; }
.vscroll .thumb { flex: 559; border-bottom: 1px solid #b8b28c; background: linear-gradient(90deg, #fbf8e4, #e9e2ba); }
.vscroll .track { flex: 49; }
.hscroll { border-top: 1px solid #c9c3a4; }
.hscroll button { width: 21px; border: solid #cfc9ab; border-width: 0 1px; display: grid; place-items: center; background: #f6f3de; }
.hscroll .thumb { flex: 159; border-right: 1px solid #b8b28c; background: linear-gradient(#fbf8e4, #e9e2ba); }
.hscroll .track { flex: 31; }
.corner { background: #f6f2dc; }
.arr { border: 4px solid transparent; color: #7a7868; }
.dim .arr { color: #c9c6b4; }
.arr.u { border-bottom: 7px solid; border-top: 0; }
.arr.d { border-top: 7px solid; border-bottom: 0; }
.arr.l { border-right: 7px solid; border-left: 0; }
.arr.r { border-left: 7px solid; border-right: 0; }

/* document area with free-floating windows */
.mdi { position: relative; flex: 1; min-width: 0; overflow: hidden; border: solid #77705c; border-width: 1px 0 0 1px; background: #d7d2bb; }
.win { position: absolute; display: flex; flex-direction: column; padding: 0 3px 3px; border: 1px solid; }
.back { left: 60px; top: 128px; width: 882px; height: 478px; border-color: #eceae4 #66626a #66626a #eceae4; background: #b4b1b0; color: #6b6866; }
.front { left: 28px; top: 28px; width: 511px; height: 450px; border-color: #fff #77747a #77747a #fff; background: #cac9c8; }
.win-title { display: flex; align-items: center; gap: 4px; height: 21px; padding: 0 2px 0 1px; color: #222; }
.back .win-title { color: #6b6669; }
.win-title h2 { font-size: 11px; line-height: 16px; color: #3a3a3a; }
.win-body { flex: 1; min-height: 0; display: flex; flex-direction: column; gap: 6px; padding: 6px 4px 5px 5px; border: 1px solid #6e6a6a; background: #fcfae8; color: #463c14; }
.back .win-body { gap: 8px; padding-right: 7px; }
.pane-row { flex: 1; min-height: 0; display: flex; }
.pane { flex: 1; display: flex; flex-direction: column; border: 1px solid #aaa486; }
.box { border: 1px solid #a5a192; background: #fff; }
.front .pane { padding: 6px 20px 8px; }
.tabs { width: 156px; margin-right: -1px; z-index: 1; }
.tabs button { display: block; width: 100%; height: 22px; padding: 0 0 2px 20px; text-align: left; background: #ece5ca; border: 1px solid #c5bd94; border-top-color: #fbf7e2; border-right-color: #aaa486; border-radius: 6px 0 0 6px; }
.tabs button:first-child { border-top-color: #c5bd94; }
.tabs button.on { position: relative; background: #fcfae8; border-color: #aaa486 transparent #aaa486 #aaa486; }
.tabs button.on::before { content: ""; position: absolute; left: 9px; top: 5px; border: 5px solid transparent; border-left-color: #222; border-right: 0; }
.mini { display: flex; gap: 7px; padding: 8px 0 12px 4px; }
.values { flex: 1; width: 250px; }
.btns { display: flex; gap: 4px; }
.near { margin-top: 6px; }
.wide { gap: 9px; }
.foot { justify-content: flex-end; gap: 6px; }
.btn { height: 21px; padding-bottom: 1px; border: 1px solid #aba585; border-radius: 3px; background: linear-gradient(#fefdf4, #f7f3de 50%, #ebe4c4); white-space: nowrap; }
.w76 { width: 76px; }
.w102 { width: 102px; }
.w128 { width: 128px; }
.w140 { width: 140px; }
.drop { display: flex; align-items: center; justify-content: space-between; padding: 0 4px 1px; }
.drop .tri { border-top-color: #b5aa86; }
.back-tabs { width: 155px; }
.back .pane { padding: 32px 6px 6px 20px; }
.attrs { height: 146px; }
.strip { height: 8px; margin: 3px 0 36px; background: #f4f1da; }
.parts { flex: 1; margin-bottom: 6px; }
.back .wide { margin-bottom: 6px; }
.note { position: absolute; left: 96px; top: 637px; font: 25px/36px "Noto Sans", sans-serif; color: #ee1414; white-space: nowrap; }

/* property palette */
.properties { width: 478px; padding: 1px 0 0 5px; display: flex; flex-direction: column; }
.properties .sep { margin: 0 -2px; }
.properties .pressed { margin: 0 -2px; padding: 1px; border: 1px solid #aaa486; background: #ece6c8; }
.gray { color: #a9a694; }
.properties .search { margin-top: 1px; }
.props { flex: 1; margin-top: 1px; border-top: 1px solid #aaa486; background: #fff; }
.props h3 { display: flex; align-items: center; gap: 2px; height: 16px; margin-bottom: 2px; padding-left: 2px; font-size: 11px; color: #4a4a14; }
.prop { display: flex; height: 20px; margin-bottom: 1px; padding-left: 9px; color: #333; }
.prop label { width: 75px; padding: 2px 0 0 2px; }
.prop.on label { height: 18px; background: #4a62b4; color: #c5cdee; }
.prop input { flex: 1; padding-left: 2px; border: 1px solid #aaa486; border-radius: 3px; }
.hint { height: 50px; padding: 2px 3px; border: 1px solid #8f8b74; border-radius: 3px; background: #fcfae8; color: #111; }
.ptabs { display: flex; gap: 6px; height: 19px; padding-left: 4px; }
.ptabs button { display: flex; align-items: center; gap: 3px; height: 19px; padding: 0 11px 0 8px; background: #e6dfc2; border: 1px solid #b5af8c; border-top: 0; border-radius: 0 0 6px 6px; white-space: nowrap; }
.ptabs .on { background: #fcfae8; }
.wintabs { display: flex; gap: 2px; height: 24px; padding: 2px 1px; border-bottom: 1px solid #dcd7bd; }
.wintabs button { display: flex; align-items: center; height: 20px; padding: 0 1px; background: #b4b0ae; border: 1px solid #a29e98; white-space: nowrap; }
.wintabs .on { background: #b1cbe6; border-color: #94a7bd; color: #23364e; }
.w172 { width: 172px; }
.status { height: 20px; padding: 2px 4px; }

.marks { position: absolute; inset: 0; width: 100%; height: 100%; pointer-events: none; }
```
